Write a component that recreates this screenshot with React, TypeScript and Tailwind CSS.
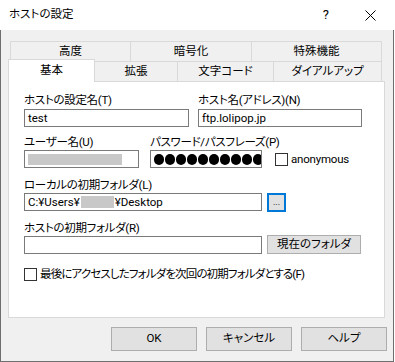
import { type ReactNode } from "react";

const font = "font-['Roboto','Noto_Sans_CJK_JP',sans-serif] [font-feature-settings:'palt']";

function Label({ children }: { children: ReactNode }) {
  return <div className="h-[16px] text-[11.5px] leading-[16px] tracking-[-0.3px] text-black">{children}</div>;
}

function TextBox({ className, children }: { className: string; children?: ReactNode }) {
  return (
    <div
      className={`flex items-center overflow-hidden border border-[#7a7a7a] bg-white pl-[3px] text-[11.5px] leading-[16px] text-black ${className}`}
    >
      {children}
    </div>
  );
}

function CheckBox() {
  return <div className="h-[13px] w-[13px] shrink-0 border border-[#333] bg-white" />;
}

function DialogButton({ children }: { children: ReactNode }) {
  return (
    <button
      type="button"
      className="flex h-[24px] w-[86px] items-center justify-center border border-[#adadad] bg-[#e1e1e1] text-[11.5px] text-black"
    >
      {children}
    </button>
  );
}

const backTabs = ["高度", "暗号化", "特殊機能"];
const backWidths = ["w-[120px]", "w-[121px]", "w-[131px]"];
const frontTabs = ["拡張", "文字コード", "ダイアルアップ"];
const frontWidths = ["w-[83px]", "w-[96px]", "w-[108px]"];

export default function App() {
  return (
    <div className={`h-[362px] w-[395px] bg-white ${font}`}>
      <div className="flex h-[362px] w-[394px] flex-col">
        {/* title bar */}
        <div className="flex h-[30px] items-center bg-white text-[11.5px] text-black">
          <span className="ml-[9px]">ホストの設定</span>
          <span className="ml-auto mr-[36px] text-[13px]">?</span>
          <svg className="mr-[18px]" width="11" height="11" viewBox="0 0 11 11">
            <path d="M0.5 0.5 L10.5 10.5 M10.5 0.5 L0.5 10.5" stroke="#000" strokeWidth="1" fill="none" />
          </svg>
        </div>

        <div className="flex flex-1 flex-col border-x border-b border-[#6f6f6f] bg-[#f0f0f0]">
          {/* tabs */}
          <div className="ml-[9px] mt-[11px] flex h-[20px] w-[372px]">
            {backTabs.map((t, i) => (
              <div
                key={t}
                className={`flex h-[20px] items-center justify-center border-l border-t border-[#d9d9d9] text-[11.5px] text-black ${backWidths[i]} ${i === 2 ? "border-r" : ""}`}
              >
                {t}
              </div>
            ))}
          </div>
          <div className="relative z-10 flex h-[20px]">
            <div className="-mt-[2px] ml-[7px] flex h-[23px] w-[87px] items-center justify-center border-x border-t border-[#d9d9d9] bg-white text-[11.5px] text-black">
              基本
            </div>
            {frontTabs.map((t, i) => (
              <div
                key={t}
                className={`flex h-[20px] items-center justify-center border-r border-t border-[#d9d9d9] text-[11.5px] text-black ${frontWidths[i]}`}
              >
                {t}
              </div>
            ))}
          </div>

          {/* panel */}
          <div className="ml-[7px] h-[237px] w-[377px] border border-[#d9d9d9] bg-white pl-[15px] pt-[10px]">
            <div className="flex">
              <div className="w-[174px]">
                <Label>ホストの設定名(T)</Label>
                <TextBox className="mt-[1px] h-[18px] w-[165px]">test</TextBox>
              </div>
              <div>
                <Label>ホスト名(アドレス)(N)</Label>
                <TextBox className="mt-[1px] h-[18px] w-[164px]">ftp.lolipop.jp</TextBox>
              </div>
            </div>

            <div className="mt-[7px] flex">
              <div className="w-[126px]">
                <Label>ユーザー名(U)</Label>
                <TextBox className="h-[18px] w-[115px]">
                  <div className="h-[11px] w-[94px] bg-[#c8c8c8]" />
                </TextBox>
              </div>
              <div>
                <Label>パスワード/パスフレーズ(P)</Label>
                <div className="flex items-center">
                  <TextBox className="h-[18px] w-[112px] border-[#3c3c3c] pl-[2px]">
                    <div className="flex gap-[1px]">
                      {Array.from({ length: 10 }).map((_, i) => (
                        <span key={i} className="h-[11px] w-[10px] shrink-0 rounded-full bg-black" />
                      ))}
                    </div>
                  </TextBox>
                  <div className="ml-[13px] flex items-center">
                    <CheckBox />
                    <span className="ml-[3px] text-[11.5px] leading-[14px] tracking-[-0.2px] text-black">anonymous</span>
                  </div>
                </div>
              </div>
            </div>

            <div className="mt-[9px]">
              <Label>ローカルの初期フォルダ(L)</Label>
              <div className="flex">
                <TextBox className="h-[18px] w-[238px]">
                  C:¥Users¥
                  <span className="mx-[1px] inline-block h-[12px] w-[33px] bg-[#c8c8c8]" />
                  ¥Desktop
                </TextBox>
                <button
                  type="button"
                  className="ml-[5px] flex h-[19px] w-[19px] items-end justify-center border-2 border-[#0078d7] bg-[#e1e1e1] pb-[3px] text-[9px] leading-[9px] text-black"
                >
                  ...
                </button>
              </div>
            </div>

            <div className="mt-[8px]">
              <Label>ホストの初期フォルダ(R)</Label>
              <div className="flex items-start">
                <TextBox className="h-[18px] w-[238px]" />
                <button
                  type="button"
                  className="-mt-[1px] ml-[5px] flex h-[19px] w-[94px] items-center justify-center border border-[#adadad] bg-[#e1e1e1] text-[11.5px] text-black"
                >
                  現在のフォルダ
                </button>
              </div>
            </div>

            <div className="mt-[13px] flex items-center">
              <CheckBox />
              <span className="ml-[3px] text-[11.5px] leading-[14px] tracking-[-0.85px] text-black">
                最後にアクセスしたフォルダを次回の初期フォルダとする(F)
              </span>
            </div>
          </div>

          {/* buttons */}
          <div className="ml-[110px] mt-[9px] flex gap-[9px]">
            <DialogButton>OK</DialogButton>
            <DialogButton>キャンセル</DialogButton>
            <DialogButton>ヘルプ</DialogButton>
          </div>
        </div>
      </div>
    </div>
  );
}
